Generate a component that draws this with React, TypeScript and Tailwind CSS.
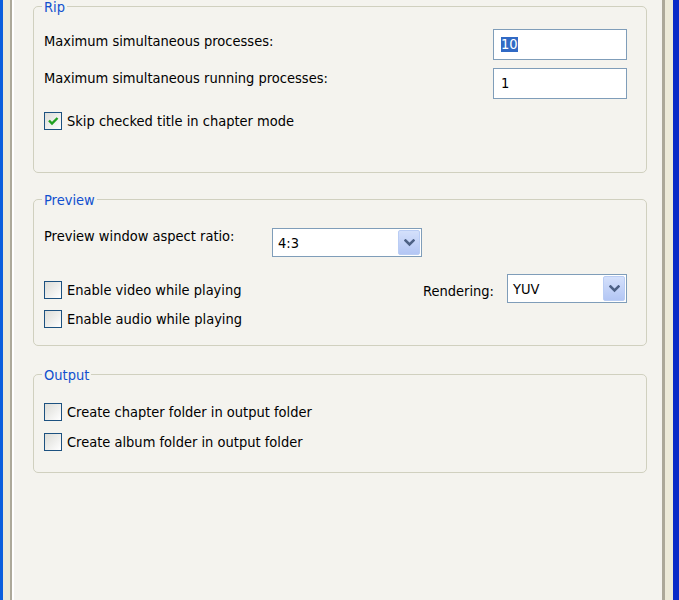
import React from "react";

function Chevron() {
  return (
    <svg width="11" height="8" viewBox="0 0 11 8">
      <path d="M1.5 1.5 L5.5 5.5 L9.5 1.5" fill="none" stroke="#4d6185" strokeWidth="2.5" strokeLinecap="square" />
    </svg>
  );
}

function Combo({ value, width }: { value: string; width: string }) {
  return (
    <div className={`flex h-[29px] ${width} border border-[#7f9db9] bg-white p-px`}>
      <div className="flex flex-1 items-center pl-[4px] leading-[16px]">{value}</div>
      <div className="flex w-[22px] items-center justify-center rounded-[2px] border border-[#bacdf4] bg-linear-to-b from-[#d4e0fb] to-[#b3c6f4]">
        <Chevron />
      </div>
    </div>
  );
}

function TextBox({ value, selected }: { value: string; selected?: boolean }) {
  return (
    <div className="flex h-[31px] w-[134px] items-center border border-[#7f9db9] bg-white pl-[7px]">
      <span className={selected ? "bg-[#316ac5] leading-[15px] text-white" : "leading-[15px]"}>{value}</span>
    </div>
  );
}

function Check({ label, checked }: { label: string; checked?: boolean }) {
  return (
    <div className="flex h-[18px] items-center gap-[5px]">
      <div className="flex h-[18px] w-[18px] items-center justify-center border border-[#1c5180] bg-linear-to-br from-[#dcdcd7] to-white">
        {checked && (
          <svg width="12" height="12" viewBox="0 0 12 12">
            <path d="M2 5.5 L5 8.5 L10.5 3" fill="none" stroke="#21a121" strokeWidth="2.4" />
          </svg>
        )}
      </div>
      <span className="leading-[16px]">{label}</span>
    </div>
  );
}

function Legend({ children }: { children: React.ReactNode }) {
  return <legend className="-ml-[2px] px-[2px] pt-[2px] leading-[10px] text-[#1150cf]">{children}</legend>;
}

export default function App() {
  return (
    <div className="flex h-[600px] w-[679px] overflow-hidden bg-[#f4f3ee] font-['DejaVu_Sans',sans-serif] text-[14.5px] font-stretch-condensed text-black">
      {/* window frame, left */}
      <div className="w-[3px] bg-[#0b5fdd]" />
      <div className="w-[7px] bg-[#ece9d8]" />
      <div className="w-[2px] bg-[#aca899]" />
      <div className="w-[2px] bg-white" />

      {/* tab page */}
      <div className="flex flex-1 flex-col pl-[19px] pr-[15px]">
        <fieldset className="rounded-[5px] border border-[#d0d0bf] pb-[42px] pl-[10px] pr-[19px] pt-[17px]">
          <Legend>Rip</Legend>
          <div className="flex items-start justify-between">
            <span className="mt-[4px] leading-[16px]">Maximum simultaneous processes:</span>
            <TextBox value="10" selected />
          </div>
          <div className="mt-[8px] flex items-start justify-between">
            <span className="mt-[2px] leading-[16px]">Maximum simultaneous running processes:</span>
            <TextBox value="1" />
          </div>
          <div className="mt-[13px]">
            <Check label="Skip checked title in chapter mode" checked />
          </div>
        </fieldset>

        <fieldset className="mt-[20px] rounded-[5px] border border-[#d0d0bf] pb-[17px] pl-[10px] pr-[19px] pt-[23px]">
          <Legend>Preview</Legend>
          <div className="flex items-start">
            <span className="w-[228px] leading-[16px]">Preview window aspect ratio:</span>
            <Combo value="4:3" width="w-[150px]" />
          </div>
          <div className="mt-[17px] flex items-start justify-between">
            <div className="flex flex-col gap-[11px] pt-[7px]">
              <Check label="Enable video while playing" />
              <Check label="Enable audio while playing" />
            </div>
            <div className="flex items-start gap-[13px]">
              <span className="mt-[9px] leading-[16px]">Rendering:</span>
              <Combo value="YUV" width="w-[120px]" />
            </div>
          </div>
        </fieldset>

        <fieldset className="mt-[22px] rounded-[5px] border border-[#d0d0bf] pb-[21px] pl-[10px] pr-[19px] pt-[23px]">
          <Legend>Output</Legend>
          <div className="flex flex-col gap-[12px]">
            <Check label="Create chapter folder in output folder" />
            <Check label="Create album folder in output folder" />
          </div>
        </fieldset>
      </div>

      {/* window frame, right */}
      <div className="w-[3px] bg-[#aca899]" />
      <div className="w-[8px] bg-[#ece9d8]" />
      <div className="w-[6px] bg-[#0a2bc8]" />
    </div>
  );
}
